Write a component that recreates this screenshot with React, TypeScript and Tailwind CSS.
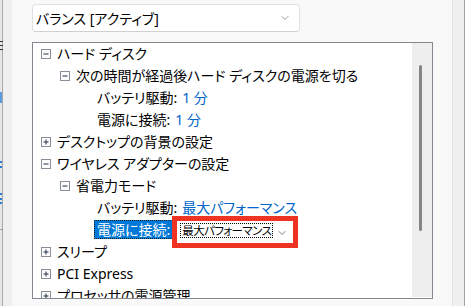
import { ChevronDown } from "lucide-react";

type Row = {
  level: 0 | 1 | 2;
  exp?: "plus" | "minus";
  text?: string;
  label?: string;
  value?: string;
  select?: string;
};

const rows: Row[] = [
  { level: 0, exp: "minus", text: "ハード ディスク" },
  { level: 1, exp: "minus", text: "次の時間が経過後ハード ディスクの電源を切る" },
  { level: 2, label: "バッテリ駆動:", value: "1 分" },
  { level: 2, label: "電源に接続:", value: "1 分" },
  { level: 0, exp: "plus", text: "デスクトップの背景の設定" },
  { level: 0, exp: "minus", text: "ワイヤレス アダプターの設定" },
  { level: 1, exp: "minus", text: "省電力モード" },
  { level: 2, label: "バッテリ駆動:", value: "最大パフォーマンス" },
  { level: 2, label: "電源に接続:", select: "最大パフォーマンス" },
  { level: 0, exp: "plus", text: "スリープ" },
  { level: 0, exp: "plus", text: "PCI Express" },
  { level: 0, exp: "plus", text: "プロセッサの電源管理" },
];

function Expander({ kind }: { kind: "plus" | "minus" }) {
  return (
    <svg width="10" height="10" viewBox="0 0 10 10" className="shrink-0">
      <rect x="0.5" y="0.5" width="9" height="9" fill="#fcfcfc" stroke="#8a909a" />
      <path d="M2.5 5h5" stroke="#1e2e45" />
      {kind === "plus" && <path d="M5 2.5v5" stroke="#1e2e45" />}
    </svg>
  );
}

function TreeRow({ row }: { row: Row }) {
  if (row.exp) {
    return (
      <div className={`flex h-[22px] items-center ${row.level === 0 ? "pl-[8px]" : "pl-[27px]"}`}>
        <Expander kind={row.exp} />
        <span className="ml-[6px] whitespace-nowrap leading-[22px]">{row.text}</span>
      </div>
    );
  }
  if (row.select) {
    return (
      <div className="flex h-[22px] items-start pl-[61px]">
        <span className="mt-[1px] h-[19px] whitespace-nowrap bg-[#0078d7] px-[3px] leading-[19px] text-white outline-1 outline-dotted outline-[#222] -outline-offset-1">
          {row.label}
        </span>
        <div className="ml-[4px] mt-[2px] flex h-[22px] w-[116px] shrink-0 items-start bg-white pl-[3px] pt-[2px] outline-[5px] outline-[#ee3322]">
          <span className="h-[15px] whitespace-nowrap border border-dotted border-black px-px text-[11.5px] leading-[13px] tracking-[-0.6px] text-black">
            {row.select}
          </span>
          <ChevronDown className="ml-auto mr-[5px] shrink-0 self-center text-[#505050]" size={12} strokeWidth={1.5} />
        </div>
      </div>
    );
  }
  return (
    <div className="flex h-[22px] items-center pl-[64px] whitespace-nowrap leading-[22px]">
      <span>{row.label}</span>
      <span className="ml-[5px] text-[#0066cc]">{row.value}</span>
    </div>
  );
}

export default function App() {
  return (
    <div className="flex h-[306px] w-[465px] overflow-hidden bg-[#f9f9f9] font-['Noto_Sans','Noto_Sans_CJK_JP',sans-serif] text-[14px] text-black [font-feature-settings:'palt']">
      {/* window behind, left edge */}
      <div className="relative flex w-[12px] shrink-0 bg-[#efefef]">
        <div className="w-[2px] bg-[#e6e6e6]" />
        <div className="w-px bg-[#a8a8a8]" />
        <div className="absolute left-0 top-[229px] h-px w-[3px] bg-[#a0a0a0]" />
        <div className="absolute left-0 top-[41px] h-[11px] w-[3px] bg-[linear-gradient(#333_0_1px,transparent_1px_4px,#333_4px_5px,transparent_5px_8px,#333_8px_9px,transparent_9px)]" />
        <div className="absolute left-0 top-[92px] h-[11px] w-[2px] bg-[#5b9be0]" />
        <div className="absolute left-0 top-[161px] h-[10px] w-[2px] bg-[linear-gradient(#2f7fd8_0_2px,transparent_2px_5px,#2f7fd8_5px_7px,transparent_7px)]" />
        <div className="absolute left-0 top-[193px] h-[11px] w-[2px] bg-[linear-gradient(#2f7fd8_0_2px,transparent_2px_5px,#2f7fd8_5px_7px,transparent_7px_9px,#2f7fd8_9px)]" />
      </div>

      {/* dialog body */}
      <div className="flex-1 pl-[20px] pt-[4px]">
        <div className="flex h-[28px] w-[268px] items-center rounded-[4px] border border-[#e1e1e1] border-b-[#d0d0d0] bg-white pl-[3px] pr-[8px]">
          <span className="whitespace-nowrap">バランス [アクティブ]</span>
          <ChevronDown className="ml-auto text-[#5a5a5a]" size={12} strokeWidth={1.25} />
        </div>

        <div className="mt-[10px] flex h-[257px] w-[401px] border border-[#828790] bg-white">
          <div className="flex-1 overflow-hidden">
            {rows.map((r, i) => (
              <TreeRow key={i} row={r} />
            ))}
          </div>
          <div className="mb-[1px] w-[20px] shrink-0 bg-[#eeeeee] pl-[7px] pt-[22px]">
            <div className="h-[166px] w-[3px] rounded-full bg-[#858585]" />
          </div>
        </div>
      </div>

      {/* right edge */}
      <div className="flex w-[13px] shrink-0 border-l border-[#e3e3e3] bg-[#f0f0f0]">
        <div className="flex-1" />
        <div className="w-px bg-[#a6a6a6]" />
      </div>
    </div>
  );
}
